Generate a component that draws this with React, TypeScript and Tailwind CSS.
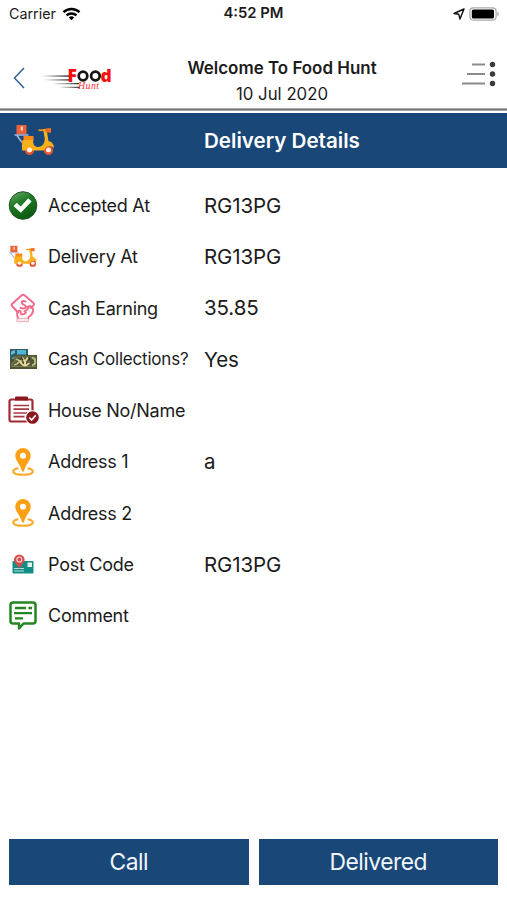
import type { ReactNode } from 'react';

type Detail = {
    label: string;
    value?: string;
    icon: ReactNode;
    labelClass?: string;
};

function WifiIcon() {
    return (
        <svg className="ml-[6px] h-[14px] w-[19px]" viewBox="0 0 18 14" fill="none" stroke="#000" strokeWidth="2.5">
            <path d="M1 5.2a11.5 11.5 0 0 1 16 0" />
            <path d="M4 8.4a7.2 7.2 0 0 1 10 0" />
            <path d="M6.3 10.5a3.8 3.8 0 0 1 5.4 0L9 13.2z" fill="#000" stroke="none" />
        </svg>
    );
}

function LocationArrow() {
    return (
        <svg className="h-[12px] w-[12px]" viewBox="0 0 12 12" fill="none" stroke="#111" strokeWidth="1.4" strokeLinejoin="round">
            <path d="M11 1 1 5.5l4.8.8L7 11z" />
        </svg>
    );
}

function Battery() {
    return (
        <svg className="h-[14px] w-[31px]" viewBox="0 0 31 14">
            <rect x=".9" y=".9" width="26.2" height="12.2" rx="3.5" fill="#fff" stroke="#a9a9a9" strokeWidth="1.2" />
            <rect x="2.8" y="2.6" width="22.2" height="8.8" rx="1.5" />
            <path d="M28.4 4.8c1.9.7 1.9 3.7 0 4.4z" fill="#a9a9a9" />
        </svg>
    );
}

function Logo() {
    return (
        <svg className="h-[36px] w-[78px]" viewBox="0 -8 78 36">
            <defs>
                <linearGradient id="speed" x1="0" x2="1">
                    <stop offset="0" stopColor="#444" stopOpacity="0" />
                    <stop offset="1" stopColor="#333" />
                </linearGradient>
            </defs>
            <g fill="url(#speed)">
                <rect x="0" y="10.3" width="28" height="1.5" />
                <rect x="3" y="14.2" width="26" height="1.4" />
                <rect x="11" y="18" width="27" height="1.3" />
                <rect x="18" y="21.7" width="21" height="1.3" />
            </g>
            <g fontFamily="'Open Sans', sans-serif" fontWeight="800" fontSize="17.5" fill="#fb0d0d">
                <text x="26.5" y="16.7">F</text>
                <text x="59.5" y="16.7">d</text>
            </g>
            <g fill="none" stroke="#151515" strokeWidth="2.7">
                <circle cx="42" cy="11" r="4.3" />
                <circle cx="54.4" cy="11" r="4.3" />
            </g>
            <text x="37" y="24.4" fontFamily="'Liberation Serif', serif" fontStyle="italic" fontSize="10" fill="#ff3535" textLength="21">Hunt</text>
        </svg>
    );
}

function MenuIcon() {
    return (
        <svg className="h-[26px] w-[36px]" viewBox="0 0 36 26">
            <g stroke="#8b8b8b" strokeWidth="1.8">
                <path d="M11 3.5h13M6 13h18M1 22.5h23" />
            </g>
            <g fill="#3a3a3a">
                <circle cx="31.5" cy="3.5" r="2.7" />
                <circle cx="31.5" cy="13" r="2.7" />
                <circle cx="31.5" cy="22.5" r="2.7" />
            </g>
        </svg>
    );
}

function Scooter({ className }: { className: string }) {
    return (
        <svg className={className} viewBox="0 0 40 32">
            <rect x="2" y="0" width="10" height="9" fill="#ec6238" />
            <path d="M6.3 1.5h2v4h-2z" fill="#ffd9ca" />
            <path d="M0 10h14M2.5 10.5l5 7" fill="none" stroke="#a9b6df" strokeWidth="1.5" />
            <circle cx="15" cy="25.5" r="4.6" fill="#e8512d" />
            <circle cx="34" cy="25.5" r="4.6" fill="#e8512d" />
            <path d="M9 11h10v5H9z" fill="#f98a18" />
            <path d="M8 15h10.5c0 5 2 7 5 7 4.5 0 7-4 6.7-9L28.5 4H32l2 12c4 1 5.500 4 5.500 7-4-3-8-2-10 2.500H7.500V20z" fill="#fab018" />
            <path d="M24 5.200h8" stroke="#f79b1a" strokeWidth="1.700" />
            <path d="M31 3.500 36.500 3v5L31 7z" fill="#f36b22" />
            <circle cx="15" cy="25" r="2.500" fill="#fff1e7" />
            <circle cx="34" cy="25" r="2.500" fill="#fff1e7" />
        </svg>
    );
}

function AcceptedIcon() {
    return (
        <svg className="h-[30px] w-[30px]" viewBox="0 0 30 30">
            <defs>
                <linearGradient id="green" x1="0" y1="0" x2=".5" y2="1">
                    <stop offset="0" stopColor="#6fae70" />
                    <stop offset=".45" stopColor="#217b26" />
                    <stop offset="1" stopColor="#0b5c0f" />
                </linearGradient>
            </defs>
            <circle cx="15" cy="14.5" r="13.8" fill="url(#green)" stroke="#1c5423" strokeWidth="1" />
            <path d="m5.500 15 3.200-3.200 4 3.600 7.500-8.200 3.400 3.300-10.800 11.200z" fill="#fff" />
        </svg>
    );
}

function EarningIcon() {
    return (
        <svg className="h-[30px] w-[26px]" viewBox="0 0 26 30" fill="none" stroke="#f3698a" strokeWidth="1.9" strokeLinejoin="round" strokeLinecap="round">
            <path d="M8 19.500 2 13q-1-1 0-2l9.500-8.500q1.500-1.200 3-.2L23.500 10q1 1 0 2.300L21 15" />
            <path d="M15.500 8.500c-3-1.300-5 .5-3 2.500l2.500 1.500c2 1.800 0 3.800-4.500 2.500" />
            <path d="m17 14 3.500-1 2.500 3c.500 4-1 6-4.500 8V25M14.500 18.500l4-3" />
            <path d="M8 24.500c-1.500-3-1-5 .5-6.500 1.500-1 3 .5 2 2M11 21c2 .8 4 0 5-1.500" />
            <path d="M7 25.500h11.500M7 28.500h11.500M7 25.500v3M18.500 25.500v3" strokeWidth="1.300" opacity=".5" />
        </svg>
    );
}

function CollectionsIcon() {
    return (
        <svg className="h-[22px] w-[29px]" viewBox="0 0 29 22">
            <path d="M1 1h18v13H1z" fill="#355b60" />
            <path d="M8 2h9v4.500H8z" fill="#51b5d6" />
            <path d="M2 3.500 6 2v3L2 7zM3 10l4-2v3l-4 2z" fill="#5cbce0" />
            <path d="M1 11h3l3-4h21v14H1z" fill="#4d5537" />
            <path d="M6 9h20v9.500H3v-3l3-2z" fill="none" stroke="#7c8052" strokeWidth="1.200" />
            <path d="m7 11 4 2-3 3-3 1M23 9.500l3 2v4l-3 2" fill="none" stroke="#c3bd80" strokeWidth="1.800" />
            <path d="m13 9.500 3 4 3-4M16 13v4M12 12.500q-1 4 4 5 5-1 4-5" fill="none" stroke="#e9d69b" strokeWidth="2" />
            <path d="m12 9 2 3M20 9v6" stroke="#30351f" strokeWidth="1.300" />
        </svg>
    );
}

function HouseIcon() {
    return (
        <svg className="h-[29px] w-[32px]" viewBox="0 0 32 29">
            <rect x="2.5" y="3.500" width="23" height="22" rx="2" fill="none" stroke="#a12a31" strokeWidth="2.200" />
            <path d="M8 1.500q0-1 1-1h11q1 0 1 1v3H8z" fill="#8b161e" />
            <path d="M6.500 9.500H22M6.500 13.200H22M6.500 17h14M6.500 20.700h11" stroke="#a53a40" strokeWidth="1.700" />
            <circle cx="25.500" cy="21.500" r="7.300" fill="#fff" />
            <circle cx="25.500" cy="21.500" r="6.300" fill="#8d171f" />
            <path d="m22.300 21.500 2.300 2.500 4.200-4.800" fill="none" stroke="#fff" strokeWidth="1.700" />
        </svg>
    );
}

function PinIcon() {
    return (
        <svg className="h-[30px] w-[24px]" viewBox="0 0 24 30">
            <path d="M7.500 21.200c-7.500 1-8 6.600 4.500 6.600s12-5.600 4.500-6.600" fill="none" stroke="#f9a925" strokeWidth="2.100" />
            <path fillRule="evenodd" d="M12 1a7.700 7.700 0 0 0-7.700 7.700C4.300 14 10 18 11 24.500h2c1-6.500 6.700-10.500 6.700-15.800A7.700 7.700 0 0 0 12 1m0 4.800a3 3 0 1 1 0 6 3 3 0 0 1 0-6" fill="#ffa014" />
        </svg>
    );
}

function PostIcon() {
    return (
        <svg className="h-[20px] w-[22px]" viewBox="0 0 22 20">
            <rect x=".5" y="7" width="21" height="12.500" rx=".8" fill="#128e86" />
            <rect x="15.500" y="8.500" width="4.500" height="4.500" fill="#e1f4ef" />
            <path d="M2 14.500h10M2 17h10" stroke="#b8e0dc" strokeWidth="1.100" />
            <path d="M7.300.5A5.300 5.300 0 0 0 2 5.800c0 3.500 3.800 5 5.300 9.200 1.500-4.200 5.300-5.700 5.300-9.200A5.300 5.300 0 0 0 7.300.5" fill="#d44c4c" />
            <circle cx="7.300" cy="5.500" r="2.500" fill="#d44c4c" stroke="#f7d6d0" strokeWidth="1.200" />
        </svg>
    );
}

function CommentIcon() {
    return (
        <svg className="h-[30px] w-[28px]" viewBox="0 0 28 30" fill="none" stroke="#248621">
            <path d="M4 1.500h20Q26.500 1.500 26.500 4v16q0 2.500-2.500 2.500h-9.500L10 27.500v-5H4Q1.500 22.500 1.500 20V4Q1.500 1.500 4 1.500z" strokeWidth="2.500" strokeLinejoin="round" />
            <path d="M6 7h11M19.500 7H23M5 12.200h18M6 17.400h8" strokeWidth="2.300" />
        </svg>
    );
}

const details: Detail[] = [
    { label: 'Accepted At', value: 'RG13PG', icon: <AcceptedIcon /> },
    { label: 'Delivery At', value: 'RG13PG', icon: <Scooter className="h-[24px] w-[28px]" /> },
    { label: 'Cash Earning', value: '35.85', icon: <EarningIcon /> },
    { label: 'Cash Collections?', value: 'Yes', icon: <CollectionsIcon />, labelClass: 'text-[17px] tracking-[-0.2px]' },
    { label: 'House No/Name', icon: <HouseIcon /> },
    { label: 'Address 1', value: 'a', icon: <PinIcon /> },
    { label: 'Address 2', icon: <PinIcon /> },
    { label: 'Post Code', value: 'RG13PG', icon: <PostIcon /> },
    { label: 'Comment', icon: <CommentIcon /> },
];

function DetailRow({ label, value, icon, labelClass = 'text-[18px] tracking-[-0.27px]' }: Detail) {
    return (
        <div className="flex h-[51.25px] items-center whitespace-nowrap">
            <div className="flex w-[46px] shrink-0 items-center justify-center">{icon}</div>
            <div className={`w-[158px] shrink-0 pl-[2px] ${labelClass}`}>{label}</div>
            <div className="pt-[1px] text-[20.5px] tracking-[-0.1px]">{value}</div>
        </div>
    );
}

export default function App() {
    return (
        <div className="flex h-[900px] w-[507px] flex-col bg-white font-['Inter',sans-serif] text-[#1b1b1b]">
            <div className="grid h-[27px] grid-cols-3 items-center pr-[7px] pl-[9px]">
                <div className="flex items-center text-[14.3px]">
                    Carrier
                    <WifiIcon />
                </div>
                <div className="-ml-[2px] text-center text-[14.8px] font-semibold">4:52 PM</div>
                <div className="flex items-center justify-end gap-[4px]">
                    <LocationArrow />
                    <Battery />
                </div>
            </div>

            <header className="flex h-[81px] items-start">
                <button className="mt-[40px] ml-[13px]">
                    <svg className="h-[22px] w-[12px]" viewBox="0 0 12 22" fill="none" stroke="#2f6296" strokeWidth="1.5">
                        <path d="M11 1 1.500 11 11 21" />
                    </svg>
                </button>
                <div className="mt-[30px] ml-[16px]">
                    <Logo />
                </div>
                <div className="mt-[28px] ml-[38px] flex w-[250px] flex-col items-center">
                    <h1 className="text-[16.95px] leading-[26px] font-semibold">Welcome To Food Hunt</h1>
                    <p className="text-[16.8px] leading-[26px]">10 Jul 2020</p>
                </div>
                <button className="mt-[34px] ml-auto pr-[10px]">
                    <MenuIcon />
                </button>
            </header>
            <div className="h-[3px] shrink-0 border-y border-[#aaa] bg-[#737373]" />

            <div className="mt-[2px] flex h-[55px] shrink-0 items-center bg-[#194777] text-white">
                <div className="w-[204px] pl-[14px]">
                    <Scooter className="h-[32px] w-[41px]" />
                </div>
                <h2 className="pt-[2px] text-[20.6px] font-semibold">Delivery Details</h2>
            </div>

            <div className="mt-[12px] flex flex-col">
                {details.map(d => <DetailRow key={d.label} {...d} />)}
            </div>

            <div className="mt-auto mb-[15px] flex gap-[10px] px-[9px]">
                <button className="h-[46px] flex-1 bg-[#194777] pt-[1px] text-[22.8px] tracking-[-0.5px] text-[#f1f6fb]">Call</button>
                <button className="h-[46px] flex-1 bg-[#194777] pt-[1px] text-[22.8px] tracking-[-0.5px] text-[#f1f6fb]">Delivered</button>
            </div>
        </div>
    );
}
